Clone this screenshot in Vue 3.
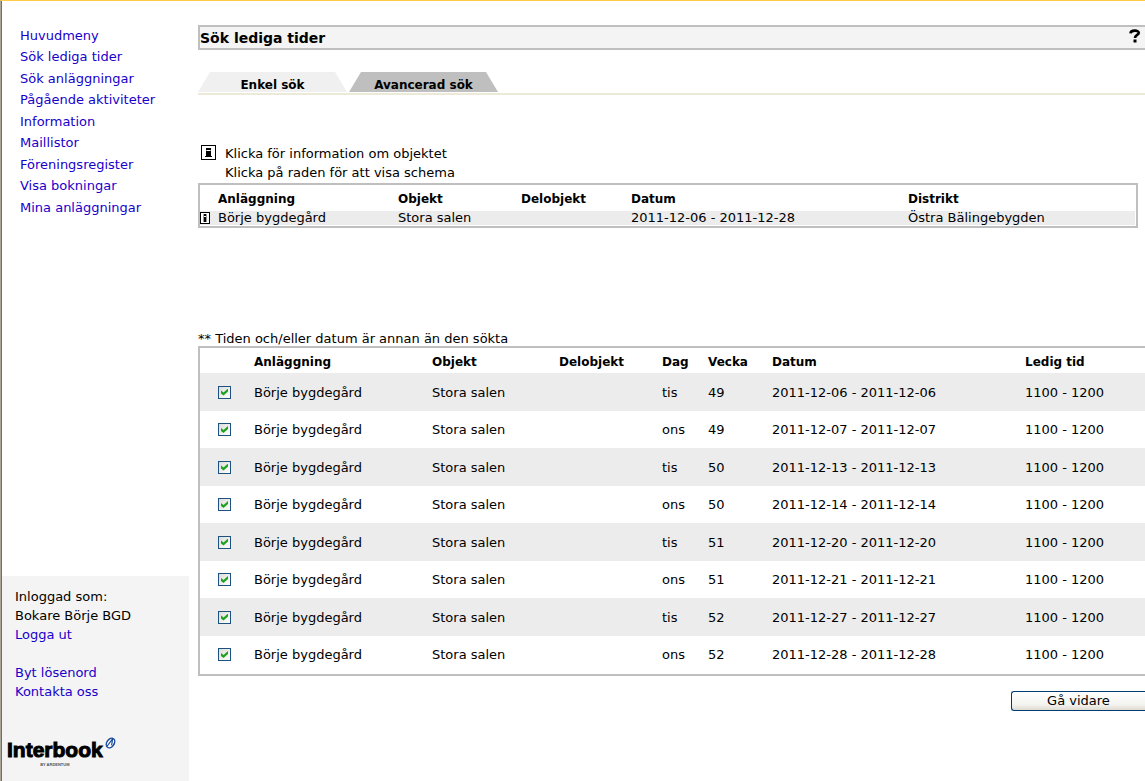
<script setup>
import { ref } from 'vue'

const menu = [
  'Huvudmeny', 'Sök lediga tider', 'Sök anläggningar', 'Pågående aktiviteter', 'Information',
  'Maillistor', 'Föreningsregister', 'Visa bokningar', 'Mina anläggningar',
]

const times = ref([
  ['tis', 49, '2011-12-06'],
  ['ons', 49, '2011-12-07'],
  ['tis', 50, '2011-12-13'],
  ['ons', 50, '2011-12-14'],
  ['tis', 51, '2011-12-20'],
  ['ons', 51, '2011-12-21'],
  ['tis', 52, '2011-12-27'],
  ['ons', 52, '2011-12-28'],
].map(([day, week, date]) => ({ day, week, date, checked: true })))
</script>

<template>
  <div class="page">
    <aside class="sidebar">
      <nav>
        <ul class="menu">
          <li v-for="item in menu" :key="item"><a href="#">{{ item }}</a></li>
        </ul>
      </nav>
      <div class="account">
        <div>Inloggad som:</div>
        <div>Bokare Börje BGD</div>
        <div><a href="#">Logga ut</a></div>
        <div class="account-links"><a href="#">Byt lösenord</a></div>
        <div><a href="#">Kontakta oss</a></div>
        <div class="logo">
          <div class="logo-word">
            <span>Interbook</span>
            <small>BY ARDENTUM</small>
          </div>
          <svg class="logo-mark" width="11" height="12" viewBox="0 0 11 12" aria-hidden="true">
            <ellipse cx="5.500" cy="6" rx="3.600" ry="5.200" transform="rotate(35 5.500 6)" fill="#fff" stroke="#184a9c" stroke-width="1.500" />
            <path fill="none" stroke="#184a9c" stroke-width="1.200" d="M2.200 9L7.600 1.800L6.600 8.400" />
          </svg>
        </div>
      </div>
    </aside>

    <main class="main">
      <header class="title">
        <h1>Sök lediga tider</h1>
        <button class="help" type="button" aria-label="Hjälp">
          <svg width="12" height="14" viewBox="0 0 12 14" aria-hidden="true">
            <path fill="none" stroke="#000" stroke-width="2.600" d="M1.500 4.300C1.700 1 9.700 .6 9.800 3.800C9.800 6 6 5.900 6 9" />
            <rect x="4.500" y="10.500" width="3" height="3" />
          </svg>
        </button>
      </header>

      <nav class="tabs">
        <a href="#" class="tab">Enkel sök</a>
        <a href="#" class="tab active">Avancerad sök</a>
      </nav>

      <div class="hints">
        <svg class="hint-icon" width="15" height="15" viewBox="0 0 15 15" aria-hidden="true">
          <rect x=".5" y=".5" width="14" height="14" fill="#fff" stroke="#000" />
          <path fill="#aaa" d="M5 3h1v9H5zM9 3h1v9H9z" />
          <path d="M5 3h5v2H5zM5 6h5v5h1v1H4v-1h1z" />
        </svg>
        <p>Klicka för information om objektet</p>
        <p>Klicka på raden för att visa schema</p>
      </div>

      <table class="objects">
        <colgroup>
          <col class="o-icon"><col class="o-place"><col class="o-object"><col class="o-part"><col class="o-date"><col>
        </colgroup>
        <thead>
          <tr><th></th><th>Anläggning</th><th>Objekt</th><th>Delobjekt</th><th>Datum</th><th>Distrikt</th></tr>
        </thead>
        <tbody>
          <tr>
            <td>
              <button class="info" type="button" aria-label="Information om objektet">
                <svg width="10" height="12" viewBox="0 0 10 12" aria-hidden="true">
                  <rect x=".5" y=".5" width="9" height="11" fill="#fff" stroke="#000" />
                  <path fill="#999" d="M3 2h1v8H3zM6 2h1v8H6z" />
                  <path d="M4 2h2v2H4zM4 5h2v5H4z" />
                </svg>
              </button>
            </td>
            <td>Börje bygdegård</td><td>Stora salen</td><td></td>
            <td>2011-12-06 - 2011-12-28</td><td>Östra Bälingebygden</td>
          </tr>
        </tbody>
      </table>

      <p class="note">** Tiden och/eller datum är annan än den sökta</p>

      <table class="times">
        <colgroup>
          <col class="t-check"><col class="t-place"><col class="t-object"><col class="t-part"><col class="t-day"><col class="t-week"><col class="t-date"><col>
        </colgroup>
        <thead>
          <tr>
            <th></th><th>Anläggning</th><th>Objekt</th><th>Delobjekt</th><th>Dag</th><th>Vecka</th><th>Datum</th><th>Ledig tid</th>
          </tr>
        </thead>
        <tbody>
          <tr v-for="time in times" :key="time.date">
            <td><input v-model="time.checked" type="checkbox" :aria-label="`Välj ${time.date}`"></td>
            <td>Börje bygdegård</td>
            <td>Stora salen</td>
            <td></td>
            <td>{{ time.day }}</td>
            <td>{{ time.week }}</td>
            <td>{{ time.date }} - {{ time.date }}</td>
            <td>1100 - 1200</td>
          </tr>
        </tbody>
      </table>

      <div class="actions">
        <button class="next" type="button">Gå vidare</button>
      </div>
    </main>
  </div>
</template>

<style>
body { margin: 0; background: #fff; }
</style>

<style scoped>
.page {
  box-sizing: border-box;
  display: flex;
  gap: 9px;
  min-height: 100vh;
  padding-left: 1px;
  border-top: 1px solid #ffcc44;
  border-left: 1px solid #aca899;
  box-shadow: inset 1px 0 #716f64;
  font-family: Verdana, "DejaVu Sans", sans-serif;
  font-size: 13px;
  line-height: 19px;
  color: #000;
}
a { color: #1800cc; text-decoration: none; }
p, h1, ul { margin: 0; padding: 0; }

.sidebar {
  display: flex;
  flex: 0 0 187px;
  flex-direction: column;
  justify-content: space-between;
}
.menu { padding: 24px 0 0 18px; list-style: none; }
.menu li { height: 22px; line-height: 21px; }
.menu li:nth-child(odd) { height: 21px; }
.account { padding: 11px 13px 14px; background: #f4f4f4; }
.account-links { margin-top: 19px; }
.logo { display: flex; margin: 36px 0 0 -8px; }
.logo-word { display: flex; flex-direction: column; }
.logo-word span {
  font: bold 21px/26px "Liberation Sans Narrow", "Liberation Sans", sans-serif;
  -webkit-text-stroke: 1px #000;
}
.logo-word small { font: bold 4px/4px "Liberation Sans", sans-serif; text-align: center; color: #555; }
.logo-mark { margin-left: 2px; }

.main { flex: 1; min-width: 0; padding-top: 24px; }
.title {
  display: flex;
  align-items: center;
  justify-content: space-between;
  height: 21px;
  padding: 0 4px 0 0;
  border: 2px solid #bfbfbf;
  border-right: 0;
  background: #f4f4f4;
}
h1 { padding-top: 2px; font-size: 14px; line-height: 19px; }
.help { display: flex; padding: 0 0 4px; border: 0; background: none; }

.tabs { display: flex; height: 20px; margin-top: 22px; padding-bottom: 1px; border-bottom: 2px solid #ece9d8; }
.tab {
  width: 149px;
  height: 19px;
  padding-top: 1px;
  overflow: hidden;
  background: #f0f0f0;
  clip-path: polygon(12px 0, 137px 0, 100% 100%, 0 100%);
  font-size: 12px;
  font-weight: bold;
  line-height: 24px;
  text-align: center;
  color: #000;
}
.tab + .tab { margin-left: 2px; }
.tab.active { background: #bfbfbf; }

.hints { position: relative; margin-top: 49px; padding-left: 27px; }
.hint-icon { position: absolute; top: 1px; left: 3px; }

table { border-collapse: separate; border-spacing: 0; border: 2px solid #bfbfbf; table-layout: fixed; }
th, td { padding: 0; text-align: left; white-space: nowrap; }
th { font-size: 12px; }
tbody tr:nth-child(odd) { background: #ececec; }

.objects { width: calc(100% - 7px); margin-top: 1px; padding: 0 1px 1px 0; }
.objects th { box-sizing: border-box; height: 26px; padding-top: 2px; }
.objects td { height: 14px; line-height: 14px; }
.o-icon { width: 18px; }
.o-place { width: 180px; }
.o-object { width: 123px; }
.o-part { width: 110px; }
.o-date { width: 277px; }
.info { display: flex; padding: 0; border: 0; background: none; }

.note { margin-top: 103px; line-height: 15px; }
.times { width: 100%; padding-bottom: 1px; border-right: 0; }
.times th { box-sizing: border-box; height: 25px; padding-top: 3px; }
.times td { height: 37px; }
.times tbody tr:nth-child(odd) td { height: 38px; }
.t-check { width: 54px; }
.t-place { width: 178px; }
.t-object { width: 127px; }
.t-part { width: 103px; }
.t-day { width: 46px; }
.t-week { width: 64px; }
.t-date { width: 253px; }

input {
  appearance: none;
  display: block;
  width: 13px;
  height: 13px;
  margin: 0 0 0 18px;
  border: 1px solid #1c5180;
  background: linear-gradient(135deg, #dcdcd7, #fff);
}
input:checked::before {
  content: "";
  display: block;
  width: 7px;
  height: 7px;
  margin: 2px;
  background: #21a121;
  clip-path: polygon(0 29%, 36% 57%, 100% 0, 100% 43%, 36% 100%, 0 71%);
}

.actions { display: flex; justify-content: flex-end; margin-top: 15px; }
.next {
  width: 134px;
  height: 20px;
  padding: 0;
  border: 1px solid #003c74;
  border-right: 0;
  border-radius: 3px 0 0 3px;
  background: linear-gradient(#fff, #f3f3ef 70%, #dedbd0);
  font: inherit;
  line-height: 18px;
}
</style>
